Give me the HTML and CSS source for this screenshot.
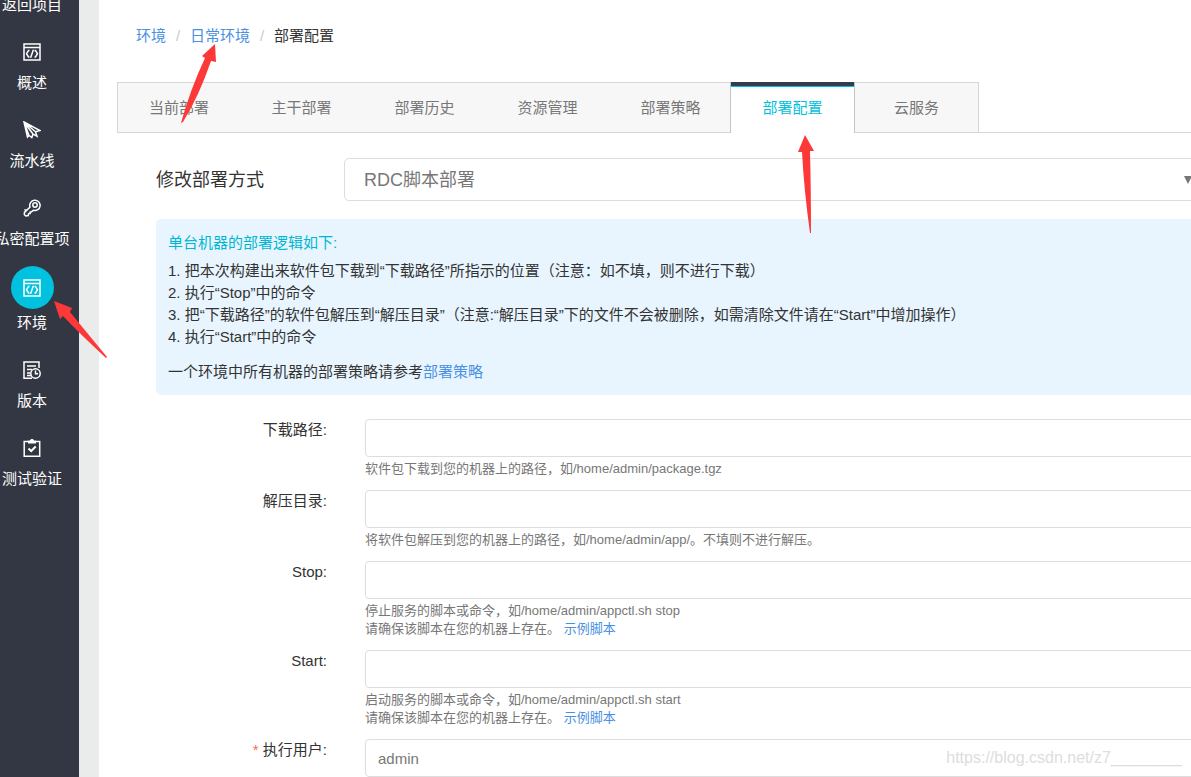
FILE: index.html
```html
<!DOCTYPE html>
<html lang="zh-CN">
<head>
<meta charset="utf-8">
<title>部署配置</title>
<link rel="stylesheet" href="styles.css">
</head>
<body>
<div class="app">
  <nav class="sidebar">
    <ul class="side-list">
      <li><a class="side-item" href="#">返回项目</a></li>
      <li><a class="side-item" href="#">
        <svg class="icon" viewBox="0 0 18 18"><path d="M1 1h16v16H1zM1 4.500h16M6.500 7.500h-1l-2 3.200 2 3.300h1M11.500 7.500h1l2 3.200-2 3.300h-1M10.400 6.800 7.600 14.800"/></svg>
        <span>概述</span></a></li>
      <li><a class="side-item" href="#">
        <svg class="icon" viewBox="0 0 18 18"><path d="M1 1l16 8.500-4.500 1.200 1.500 4.500-4-2.200-1.200 3.500L6 14.500 4.500 16zM1 1l5 13.500M1 1l9 12M1 1l11.500 9.700"/></svg>
        <span>流水线</span></a></li>
      <li><a class="side-item" href="#">
        <svg class="icon" viewBox="0 0 18 18"><path d="M7 8A5.200 5.200 0 1 1 10.300 11.300L8 13l-1 .2.200 1.300-1.700.3-.2 1.700-2.500.5-1.500-1.500.2-2.500 1.300-.5-.5-1.500 1.500.3z"/><circle cx="12" cy="6" r="2.200"/></svg>
        <span>私密配置项</span></a></li>
      <li><a class="side-item side-item-active" href="#" aria-current="page">
        <span class="side-badge"><svg class="icon" viewBox="0 0 18 18"><path d="M1 1h16v16H1zM1 4.500h16M6.500 7.500h-1l-2 3.200 2 3.300h1M11.500 7.500h1l2 3.200-2 3.300h-1M10.400 6.800 7.600 14.800"/></svg></span>
        <span>环境</span></a></li>
      <li><a class="side-item" href="#">
        <svg class="icon" viewBox="0 0 18 18"><path d="M9 17.200H1V1h15v6M4 5h9M4 8.500h5M4 12h3M4 14.500h4"/><circle cx="12.500" cy="12.500" r="4.700"/><path d="M12.500 9.500v3.200H15"/></svg>
        <span>版本</span></a></li>
      <li><a class="side-item" href="#">
        <svg class="icon" viewBox="0 0 18 18"><path d="M5 2.500H1.200v14.700h15.500V2.500H13"/><path class="solid" d="M5 1.500h2Q9-2 11 1.500h2v3H5z"/><path class="tick" d="m5.500 9.500 2.700 2.500 4.500-4.500"/></svg>
        <span>测试验证</span></a></li>
    </ul>
  </nav>

  <main class="main">
    <nav class="breadcrumb">
      <a href="#">环境</a><span class="slash">/</span><a href="#">日常环境</a><span class="slash">/</span><span>部署配置</span>
    </nav>

    <nav class="tabs">
      <div class="tab-list">
        <a class="tab" href="#">当前部署</a>
        <a class="tab" href="#">主干部署</a>
        <a class="tab" href="#">部署历史</a>
        <a class="tab" href="#">资源管理</a>
        <a class="tab" href="#">部署策略</a>
        <a class="tab tab-active" href="#" aria-current="page">部署配置</a>
        <a class="tab" href="#">云服务</a>
      </div>
    </nav>

    <form class="panel">
      <div class="mode">
        <label class="mode-label" for="mode">修改部署方式</label>
        <div class="mode-box">
          <select class="mode-select" id="mode"><option>RDC脚本部署</option></select>
          <svg class="caret" viewBox="0 0 8 8"><path d="M0 0h8L4 8z"/></svg>
        </div>
      </div>

      <section class="info">
        <p class="info-title">单台机器的部署逻辑如下:</p>
        <ol class="info-list">
          <li>把本次构建出来软件包下载到“下载路径”所指示的位置（注意：如不填，则不进行下载）</li>
          <li>执行“Stop”中的命令</li>
          <li>把“下载路径”的软件包解压到“解压目录”（注意:“解压目录”下的文件不会被删除，如需清除文件请在“Start”中增加操作）</li>
          <li>执行“Start”中的命令</li>
        </ol>
        <p>一个环境中所有机器的部署策略请参考<a href="#">部署策略</a></p>
      </section>

      <div class="field">
        <label class="field-label" for="path">下载路径:</label>
        <div class="field-body">
          <input class="text-input" id="path" type="text">
          <p class="hint">软件包下载到您的机器上的路径，如/home/admin/package.tgz</p>
        </div>
      </div>
      <div class="field">
        <label class="field-label" for="dir">解压目录:</label>
        <div class="field-body">
          <input class="text-input" id="dir" type="text">
          <p class="hint">将软件包解压到您的机器上的路径，如/home/admin/app/。不填则不进行解压。</p>
        </div>
      </div>
      <div class="field">
        <label class="field-label" for="stop">Stop:</label>
        <div class="field-body">
          <input class="text-input" id="stop" type="text">
          <p class="hint">停止服务的脚本或命令，如/home/admin/appctl.sh stop<br>请确保该脚本在您的机器上存在。 <a href="#">示例脚本</a></p>
        </div>
      </div>
      <div class="field">
        <label class="field-label" for="start">Start:</label>
        <div class="field-body">
          <input class="text-input" id="start" type="text">
          <p class="hint">启动服务的脚本或命令，如/home/admin/appctl.sh start<br>请确保该脚本在您的机器上存在。 <a href="#">示例脚本</a></p>
        </div>
      </div>
      <div class="field">
        <label class="field-label" for="user"><span class="required">*</span> 执行用户:</label>
        <div class="field-body">
          <input class="text-input" id="user" type="text" value="admin">
        </div>
      </div>
    </form>
  </main>

  <svg class="arrows" aria-hidden="true">
    <path d="M215 44 202 56 205 58Q190 90 181 123L183 122Q199 96 211 61L216 62z"/>
    <path d="M805 135 798 152 802 152Q804 190 810 233H811Q811 190 810 151H814z"/>
    <path d="M54 301 60 319 63 316Q80 334 106 358L107 357Q88 334 70 312L72 308z"/>
  </svg>
  <div class="watermark">https://blog.csdn.net/z7________</div>
</div>
</body>
</html>
```

FILE: styles.css
```css
* {
  box-sizing: border-box;
}

body {
  margin: 0;
  background: #fff;
  color: #333;
  font: 15px/22px "Liberation Sans", "Noto Sans CJK SC", sans-serif;
  text-spacing-trim: space-all;
}

a {
  color: #4a90e2;
  text-decoration: none;
}

p {
  margin: 0;
}

.app {
  position: relative;
  display: flex;
  height: 100vh;
  overflow: hidden;
}

/* Sidebar */
.sidebar {
  flex: none;
  width: 99px;
  padding-right: 15px;
  background: #333743;
  border-right: 20px solid #eaecec;
}

.side-list {
  display: flex;
  flex-direction: column;
  gap: 28px;
  margin: -5px 0 0;
  padding: 0;
  list-style: none;
}

.side-item {
  display: flex;
  flex-direction: column;
  align-items: center;
  gap: 12px;
  color: #fff;
  line-height: 20px;
  white-space: nowrap;
}

.side-item-active {
  gap: 4px;
  margin-top: -11px;
}

.side-badge {
  display: flex;
  align-items: center;
  justify-content: center;
  width: 43px;
  height: 43px;
  border-radius: 50%;
  background: #00c1de;
}

.icon {
  width: 18px;
  height: 18px;
  fill: none;
  stroke: #fff;
  stroke-width: 1.5;
}

.icon .solid {
  fill: #fff;
  stroke: none;
}

.icon .tick {
  stroke-width: 2;
}

/* Main column */
.main {
  flex: 1;
  min-width: 0;
  padding-left: 18px;
}

.breadcrumb {
  display: flex;
  padding: 25px 19px 35px;
}

.slash {
  width: 24px;
  color: #ccc;
  text-align: center;
}

.tabs {
  border-bottom: 1px solid #d7d7d7;
}

.tab-list {
  display: flex;
  width: max-content;
  margin-bottom: -1px;
  border: 1px solid #d7d7d7;
  border-width: 0 1px 0 1px;
}

.tab {
  width: 123px;
  height: 51px;
  border: 1px solid #d7d7d7;
  border-width: 1px 0;
  background: #f7f7f7;
  color: #777;
  line-height: 49px;
  text-align: center;
}

.tab:first-child {
  width: 122px;
}

.tab-active {
  width: 125px;
  margin-left: -2px;
  border: 0 solid #c4c4c4;
  border-width: 0 1px;
  background: linear-gradient(#333b4d 4px, #00c1de 4px, #00c1de 5px, #fff 5px);
  color: #00c1de;
  line-height: 51px;
}

/* Panel runs past the right edge of the window */
.panel {
  margin: 25px -10px 0 39px;
}

.mode {
  display: flex;
  align-items: center;
  font-size: 18px;
}

.mode-label {
  width: 188px;
}

.mode-box {
  position: relative;
  flex: 1;
}

.mode-select {
  display: block;
  width: 100%;
  height: 43px;
  padding: 1px 19px 0;
  appearance: none;
  border: 1px solid #ddd;
  border-radius: 5px;
  background: #fff;
  color: #777;
  font: inherit;
}

.caret {
  position: absolute;
  top: 18px;
  right: 9px;
  width: 8px;
  height: 8px;
  fill: #777;
}

.info {
  margin: 18px 0 24px;
  padding: 13px 12px 12px;
  border-radius: 5px;
  background: #e8f5fe;
}

.info-title {
  color: #00b7d3;
}

.info-list {
  margin: 6px 0 13px;
  padding: 0;
  list-style-position: inside;
}

.field {
  display: flex;
  gap: 38px;
  margin-bottom: 12px;
}

.field-label {
  width: 171px;
  text-align: right;
}

.field-body {
  flex: 1;
}

.text-input {
  display: block;
  width: 100%;
  height: 38px;
  padding: 0 12px;
  border: 1px solid #ddd;
  border-radius: 4px;
  background: #fff;
  color: #777;
  font: inherit;
}

.hint {
  margin-top: 3px;
  color: #777;
  font-size: 13px;
  line-height: 18px;
}

.required {
  color: #f76b5a;
}

/* Annotations */
.arrows {
  position: absolute;
  inset: 0;
  width: 100%;
  height: 100%;
  fill: #fd3838;
  pointer-events: none;
}

.watermark {
  position: absolute;
  right: 9px;
  bottom: 8px;
  color: #ddd;
  font-size: 16px;
}
```
